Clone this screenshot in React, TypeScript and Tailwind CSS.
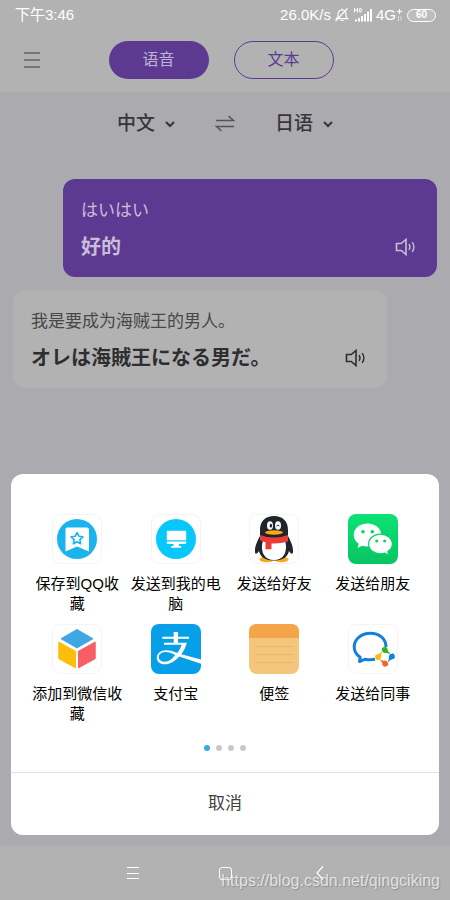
import type { ReactNode } from 'react';

function Speaker() {
  return (
    <svg viewBox="0 0 22 18" className="h-[18px] w-[22px]" fill="none" stroke="currentColor" strokeWidth="1.6">
      <path d="M1.5 5.5h4.700L11 1.500v15l-4.800-4H1.500z" />
      <path d="M14 6.200q2 2.800 0 5.600M17.200 4.200q3.400 4.800 0 9.600" strokeWidth="1.400" />
    </svg>
  );
}

function Chevron() {
  return (
    <svg viewBox="0 0 10 7" className="h-[7px] w-[10px]" fill="none" stroke="currentColor" strokeWidth="2">
      <path d="M1 1l4 4 4-4" />
    </svg>
  );
}

function StatusBar() {
  return (
    <div className="flex h-[30px] items-center justify-between pr-[14px] pl-[15px] text-[15px] text-white">
      <span>下午3:46</span>
      <div className="flex items-center">
        <span>26.0K/s</span>
        <svg viewBox="0 0 16 16" className="ml-[3px] h-4 w-4" fill="none" stroke="white" strokeWidth="1.2">
          <path d="M2.500 11.700c1.300-1 1.600-2 1.600-4.400C4.100 4.500 5.600 3 8 3s3.900 1.500 3.900 4.300c0 2.400.3 3.400 1.600 4.400zM8 3V1.500M6.500 13.500h3M13.500 1.500L1.500 14" />
        </svg>
        <svg viewBox="0 0 20 16" className="ml-[3px] h-4 w-5" fill="none" stroke="white">
          <path d="M1.500 1v4.500M4.500 1v4.500M1.500 3.200h3M6.700 1.500v3.500h1.200q1.800-1.700 0-3.500z" strokeWidth="1" />
          <path d="M3 12.500v2M6 11v3.500M9 9v5.500M12 7v7.500M15 4.500v10M18 2v12.500" strokeWidth="2" />
        </svg>
        <span className="ml-[3px]">4G</span>
        <svg viewBox="0 0 7 14" className="h-[14px] w-[7px]" fill="none" stroke="white">
          <path d="M3.500 1v5M1 3.500h5" strokeWidth="1.200" />
          <path d="M2.500 8v5M5 8v5" strokeWidth="1" opacity=".5" />
        </svg>
        <span className="ml-[4px] flex h-[13px] w-[29px] items-center justify-center rounded-full border border-white bg-white/15 text-[10px] leading-none font-bold">
          60
        </span>
      </div>
    </div>
  );
}

function LanguageSelect({ label, value, options }: { label: string; value: string; options: string[] }) {
  return (
    <label className="flex items-center gap-[9px] text-[#36363a]">
      <select
        aria-label={label}
        defaultValue={value}
        className="appearance-none bg-transparent p-0 text-[19px] leading-7 font-medium outline-none"
      >
        {options.map((o) => (
          <option key={o}>{o}</option>
        ))}
      </select>
      <Chevron />
    </label>
  );
}

function Bubble({ source, result, mine }: { source: string; result: string; mine?: boolean }) {
  return (
    <article
      className={
        mine
          ? 'ml-[50px] rounded-xl bg-[#5d3a92] px-[18px] pt-[18px] pb-4 text-[#c9bdd9]'
          : 'mr-[50px] rounded-xl bg-[#b2b2b2] px-[18px] pt-[18px] pb-4 text-[#2e2e31]'
      }
    >
      <p className={mine ? 'text-[17px] leading-7' : 'text-[17px] leading-7 text-[#47474b]'}>{source}</p>
      <div className="mt-2 flex items-center justify-between">
        <p className="text-[20px] leading-7 font-bold">{result}</p>
        <button aria-label="播放" className="pr-[2px]">
          <Speaker />
        </button>
      </div>
    </article>
  );
}

function Tile({ children, framed }: { children: ReactNode; framed?: boolean }) {
  return (
    <svg viewBox="0 0 50 50" className="h-[50px] w-[50px]">
      {framed && <rect x=".5" y=".5" width="49" height="49" rx="8" fill="#fff" stroke="#f4f4f4" />}
      {children}
    </svg>
  );
}

const starPath = 'M25 18.500l1.800 3.700 4.100.6-3 2.900.7 4.100-3.600-2-3.600 2 .7-4.100-3-2.900 4.100-.6z';

const targets: { name: string; icon: ReactNode }[] = [
  {
    name: '保存到QQ收藏',
    icon: (
      <Tile framed>
        <circle cx="25" cy="25" r="20" fill="#1bb3ee" />
        <path d="M15 13.500h20q2 0 2 2V37.500l-12-5-11.500 5V15q0-1.500 1.500-1.500z" fill="#fff" />
        <path d={starPath} fill="none" stroke="#1bb3ee" strokeWidth="1.600" strokeLinejoin="round" />
      </Tile>
    ),
  },
  {
    name: '发送到我的电脑',
    icon: (
      <Tile framed>
        <circle cx="25" cy="25" r="20" fill="#06c8fa" />
        <path d="M16.500 16.700h18q.7 0 .7.700v8.800H15.800v-8.800q0-.7.7-.7zM15.800 27.500h19.400v1.700q0 .7-.7.700H28v2.200h2.200v1.700h-10v-1.700h2.300v-2.200h-6q-.7 0-.7-.7z" fill="#fff" />
      </Tile>
    ),
  },
  {
    name: '发送给好友',
    icon: (
      <Tile framed>
        <ellipse cx="17.500" cy="45.500" rx="7" ry="2.700" fill="#f8a917" />
        <ellipse cx="32.500" cy="45.500" rx="7" ry="2.700" fill="#f8a917" />
        <path d="M11 22C9 26 5.500 32 6 38c.3 3 2 2 4-1 1 5 5 9.500 15 9.500S39 42 40 37c2 3 3.700 4 4 1 .5-6-3-12-5-16V16C39 7 33.500 2 25 2S11 7 11 16z" fill="#20242c" />
        <path d="M14 27h22c1.500 4 1.500 10-1 14-2 3.500-5.500 5-10 5s-8-1.500-10-5c-2.500-4-2.500-10-1-14z" fill="#fff" />
        <path d="M11 21q14 5 28 0v6.500Q31 30 22.500 29.500v5.700h-6v-7L11 26.500z" fill="#e93b38" />
        <ellipse cx="21" cy="11.500" rx="3" ry="4.300" fill="#fff" />
        <ellipse cx="29" cy="11.500" rx="3" ry="4.300" fill="#fff" />
        <ellipse cx="21.900" cy="11.700" rx="1.200" ry="1.900" fill="#20242c" />
        <path d="M27.400 12.300q1.500-2.800 3 0" fill="none" stroke="#20242c" strokeWidth="1" />
        <ellipse cx="25" cy="18.500" rx="9" ry="2.200" fill="#f8a917" />
      </Tile>
    ),
  },
  {
    name: '发送给朋友',
    icon: (
      <Tile>
        <defs>
          <linearGradient id="chatGreen" x1="0" y1="0" x2="0" y2="1">
            <stop offset="0" stopColor="#0be374" />
            <stop offset="1" stopColor="#08c463" />
          </linearGradient>
        </defs>
        <rect width="50" height="50" rx="8" fill="url(#chatGreen)" />
        <path d="M19.500 9.500C11.700 9.500 5.700 14.500 5.700 21c0 3.600 1.900 6.700 5 8.800L9.500 34l4.700-2.300c1.700.5 3.400.8 5.300.8 7.800 0 13.800-5 13.800-11.500s-6-11.500-13.800-11.500z" fill="#fff" />
        <path d="M32.500 20.200c-6.700 0-11.900 4.200-11.900 9.800s5.200 9.800 11.900 9.800c1.600 0 3-.2 4.400-.6l3.800 2-.9-3.600c2.800-1.800 4.600-4.500 4.600-7.600 0-5.600-5.200-9.800-11.900-9.800z" fill="#fff" stroke="#09d169" strokeWidth="1.200" />
        <g fill="#09d169">
          <circle cx="15" cy="17.700" r="1.800" />
          <circle cx="24.300" cy="17.700" r="1.800" />
          <circle cx="28.700" cy="27" r="1.500" />
          <circle cx="36.600" cy="27" r="1.500" />
        </g>
      </Tile>
    ),
  },
  {
    name: '添加到微信收藏',
    icon: (
      <Tile framed>
        <g strokeWidth="1" strokeLinejoin="round">
          <path d="M25 5.500l16 9.200-16 9.200-16-9.200z" fill="#40a7e3" stroke="#40a7e3" />
          <path d="M6.800 18l16.700 9.300v16.500L6.800 34.700z" fill="#fdbd0b" stroke="#fdbd0b" />
          <path d="M43.200 18l-16.700 9.300v16.500l16.700-9.100z" fill="#f65f63" stroke="#f65f63" />
        </g>
      </Tile>
    ),
  },
  {
    name: '支付宝',
    icon: (
      <Tile>
        <rect width="50" height="50" rx="8" fill="#079fe7" />
        <path d="M22.700 8h4.300v4.800h11v2H27v4h8.800C34.300 24.300 32.500 27.600 30.300 30.200L50 35.500v4.300L28.200 32.500C24 37.200 19 40.300 13.800 40.300 9 40.300 5.800 37.700 5.800 33.800c0-4.600 4.200-7.600 9.300-7.600 4 0 7.500 1.300 11.300 2.700 1.900-2.300 3.300-5 4.200-8.100H13v-2h9.700v-4h-11.400v-2h11.400zM24.300 31c-3.400-1.700-6.600-2.900-9.500-2.900-4.200 0-7 2.200-7 5.200 0 2.700 2.400 4.500 6 4.500 3.900 0 7.300-2.500 10.500-6.800z" fill="#fff" />
      </Tile>
    ),
  },
  {
    name: '便签',
    icon: (
      <Tile>
        <rect width="50" height="50" rx="8" fill="#f4c57b" />
        <path d="M0 14V8q0-8 8-8h34q8 0 8 8v6z" fill="#f4a54a" />
        <path d="M6 22.500h38M6 30.500h38M6 38.500h38" stroke="#dfb36d" strokeWidth=".8" />
      </Tile>
    ),
  },
  {
    name: '发送给同事',
    icon: (
      <Tile framed>
        <path d="M38 23C38 14.500 31 9.200 22.300 9.200S6.200 15 6.200 22.700c0 4.600 2.400 8.200 6 10.600L11.500 37.600l5.700-2.400c3.300.8 6.500.7 9.800.1" fill="none" stroke="#1480dc" strokeWidth="3" strokeLinejoin="round" />
        <path d="M34 26.500a2.800 2.800 0 1 1 5.500-.8q.5 2.200 3.500 4.800-3.500-2-5.800-1.500-2.700 0-3.200-2.500z" fill="#2fb525" />
        <path d="M43.300 29.800a2.800 2.800 0 1 1 .8 5.500q-2.200.5-4.800 3.500 2-3.500 1.500-5.800 0-2.700 2.500-3.200z" fill="#1480dc" />
        <path d="M40 39.100a2.800 2.800 0 1 1-5.500.8q-.5-2.200-3.500-4.800 3.500 2 5.800 1.500 2.700 0 3.200 2.500z" fill="#f3632a" />
        <path d="M30.700 35.800a2.800 2.800 0 1 1-.8-5.500q2.200-.5 4.800-3.500-2 3.500-1.500 5.800 0 2.700-2.500 3.200z" fill="#fbbc09" />
      </Tile>
    ),
  },
];

function ShareSheet() {
  return (
    <section
      role="dialog"
      aria-label="分享"
      className="absolute inset-x-[11px] bottom-[65px] rounded-xl bg-white text-black"
    >
      <div className="grid grid-cols-4 gap-y-[10px] px-[17px] pt-10">
        {targets.map((t) => (
          <button key={t.name} className="flex flex-col items-center gap-[10px] px-1">
            {t.icon}
            <span className="min-h-10 text-[15px] leading-5">{t.name}</span>
          </button>
        ))}
      </div>
      <div className="flex h-12 items-center justify-center gap-[6px]">
        <i className="size-[6px] rounded-full bg-[#38a6e8]" />
        <i className="size-[6px] rounded-full bg-[#c9c9cb]" />
        <i className="size-[6px] rounded-full bg-[#c9c9cb]" />
        <i className="size-[6px] rounded-full bg-[#c9c9cb]" />
      </div>
      <button className="h-[63px] w-full border-t border-[#e2e2e2] text-[17px] text-[#414141]">取消</button>
    </section>
  );
}

export default function App() {
  return (
    <div className="relative flex min-h-screen flex-col bg-[#ababaf] font-['Liberation_Sans','Noto_Sans_CJK_SC',sans-serif]">
      <header className="bg-[#b2b2b2]">
        <StatusBar />
        <div className="grid h-[62px] grid-cols-[1fr_auto_1fr] items-center pr-8 pb-[2px] pl-6">
          <button aria-label="菜单" className="w-4">
            <svg viewBox="0 0 16 18" className="h-[18px] w-4" stroke="#77777a" strokeWidth="2">
              <path d="M0 2h16M0 9h16M0 16h16" />
            </svg>
          </button>
          <div className="flex gap-[25px] text-base">
            <button className="h-[38px] w-[100px] rounded-full bg-[#5d3a92] text-[#c0b3d1]">语音</button>
            <button className="h-[38px] w-[100px] rounded-full border border-[#5d3a92] text-[#5d3a92]">文本</button>
          </div>
        </div>
      </header>

      <main className="flex-1">
        <div className="flex items-center justify-center gap-10 pt-[18px] text-[#56565a]">
          <LanguageSelect label="源语言" value="中文" options={['中文', '日语']} />
          <button aria-label="交换语言">
            <svg viewBox="0 0 20 18" className="h-[18px] w-5" fill="none" stroke="currentColor" strokeWidth="1.600">
              <path d="M1 5.500h17.500l-5-4.500M19 11.500H1.500l5 4.500" />
            </svg>
          </button>
          <LanguageSelect label="目标语言" value="日语" options={['中文', '日语']} />
        </div>
        <div className="flex flex-col gap-[13px] px-[13px] pt-[41px]">
          <Bubble mine source="はいはい" result="好的" />
          <Bubble source="我是要成为海贼王的男人。" result="オレは海賊王になる男だ。" />
        </div>
      </main>

      <nav className="grid h-[54px] grid-cols-[1fr_auto_1fr] items-center gap-x-20 bg-[#b2b2b2] text-white">
        <button aria-label="最近任务" className="justify-self-end">
          <svg viewBox="0 0 12 12" className="size-3" stroke="currentColor" strokeWidth="1">
            <path d="M0 .5h12M0 6.500h12M0 11.500h12" />
          </svg>
        </button>
        <button aria-label="主屏幕" className="size-[13px] rounded-[3px] border border-white" />
        <button aria-label="返回" className="justify-self-start">
          <svg viewBox="0 0 16 14" className="h-[14px] w-4" fill="none" stroke="currentColor" strokeWidth="1.200">
            <path d="M11 .5L5 7l6 6.500" />
          </svg>
        </button>
      </nav>

      <ShareSheet />
      <a
        href="https://blog.csdn.net/qingciking"
        className="absolute right-[10px] bottom-[7px] text-base leading-6 text-white/70 [text-shadow:1px_1px_1px_rgba(0,0,0,0.2)]"
      >
        https://blog.csdn.net/qingciking
      </a>
    </div>
  );
}
